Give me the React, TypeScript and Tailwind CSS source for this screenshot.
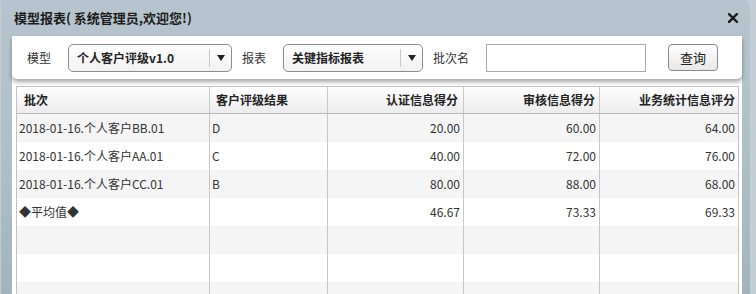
import React from 'react';

const rows = [
  { name: '2018-01-16.个人客户BB.01', grade: 'D', a: '20.00', b: '60.00', c: '64.00' },
  { name: '2018-01-16.个人客户AA.01', grade: 'C', a: '40.00', b: '72.00', c: '76.00' },
  { name: '2018-01-16.个人客户CC.01', grade: 'B', a: '80.00', b: '88.00', c: '68.00' },
  { name: '◆平均值◆', grade: '', a: '46.67', b: '73.33', c: '69.33' },
  { name: '', grade: '', a: '', b: '', c: '' },
  { name: '', grade: '', a: '', b: '', c: '' },
  { name: '', grade: '', a: '', b: '', c: '' },
];

function Select({ value, width }: { value: string; width: string }) {
  return (
    <div
      className={`${width} h-[28px] flex items-center rounded-[5px] border border-[#8d8d8d] bg-gradient-to-b from-white to-[#f1f1f1]`}
    >
      <span className="flex-1 pl-[8px] font-bold text-[12px] text-[#222]">{value}</span>
      <span className="w-px h-[18px] bg-[#c9c9c9]" />
      <span className="w-[21px] flex justify-center">
        <svg width="8" height="6" viewBox="0 0 8 6">
          <path d="M0 0 L8 0 L4 6 Z" fill="#222" />
        </svg>
      </span>
    </div>
  );
}

export default function App() {
  const cols = ['w-[193px]', 'w-[118px]', 'w-[136px]', 'w-[136px]', 'flex-1'];
  return (
    <div className="w-[756px] h-[294px] overflow-hidden bg-[#c4cfd5] font-['Noto_Sans_CJK_SC','Noto_Sans',sans-serif] text-[#333]">
      <div className="w-[750px] h-[294px] overflow-hidden rounded-tr-[6px] bg-gradient-to-b from-[#b6c5cd] via-[#afbfc8] to-[#a2b4be] border-l border-[#c3ced4] flex flex-col">
        <div className="h-[36px] shrink-0 flex items-center justify-between pl-[13px] pr-[12px]">
          <span className="font-bold text-[13px] text-[#1b1b1b]">模型报表( 系统管理员,欢迎您!)</span>
          <svg width="10" height="10" viewBox="0 0 10 10" className="mb-px">
            <path d="M1 1 L9 9 M9 1 L1 9" stroke="#1a1a1a" strokeWidth="2.4" strokeLinecap="square" />
          </svg>
        </div>
        <div className="ml-[11px] w-[730px] shrink-0 h-[300px] bg-white">
          <div className="h-[43px] flex items-center rounded-b-[5px] bg-white shadow-[0_3px_4px_rgba(0,0,0,0.35)] relative z-10 text-[12px]">
            <span className="ml-[15px] text-[#333]">模型</span>
            <div className="ml-[17px]">
              <Select value="个人客户评级v1.0" width="w-[164px]" />
            </div>
            <span className="ml-[10px] text-[#333]">报表</span>
            <div className="ml-[17px]">
              <Select value="关键指标报表" width="w-[140px]" />
            </div>
            <span className="ml-[10px] text-[#333]">批次名</span>
            <div className="ml-[17px] w-[160px] h-[28px] border border-[#a9a9a9] bg-white" />
            <div className="ml-[22px] w-[50px] h-[27px] rounded-[4px] border border-[#8a8a8a] bg-gradient-to-b from-white to-[#e8e8e8] flex items-center justify-center text-[13px] text-[#222]">
              查询
            </div>
          </div>
          <div className="mt-[7px] ml-[4px] w-[723px] border-l border-r border-t border-[#c2c2c2] text-[12px]">
            <div className="h-[27px] flex bg-gradient-to-b from-white to-[#ececec] border-b border-[#b9b9b9] font-bold text-[#222]">
              <div className={`${cols[0]} border-r border-[#c8c8c8] flex items-center pl-[7px]`}>批次</div>
              <div className={`${cols[1]} border-r border-[#c8c8c8] flex items-center pl-[6px]`}>客户评级结果</div>
              <div className={`${cols[2]} border-r border-[#c8c8c8] flex items-center justify-end pr-[5px]`}>认证信息得分</div>
              <div className={`${cols[3]} border-r border-[#c8c8c8] flex items-center justify-end pr-[4px]`}>审核信息得分</div>
              <div className={`${cols[4]} flex items-center justify-end pr-[3px]`}>业务统计信息评分</div>
            </div>
            {rows.map((r, i) => (
              <div key={i} className={`h-[28px] flex ${i % 2 === 0 ? 'bg-[#f5f5f5]' : 'bg-white'}`}>
                <div className={`${cols[0]} border-r border-[#c8c8c8] flex items-center pl-[2px] text-[#333]`}>{r.name}</div>
                <div className={`${cols[1]} border-r border-[#c8c8c8] flex items-center pl-[2px]`}>{r.grade}</div>
                <div className={`${cols[2]} border-r border-[#c8c8c8] flex items-center justify-end pr-[3px]`}>{r.a}</div>
                <div className={`${cols[3]} border-r border-[#c8c8c8] flex items-center justify-end pr-[3px]`}>{r.b}</div>
                <div className={`${cols[4]} flex items-center justify-end pr-[3px]`}>{r.c}</div>
              </div>
            ))}
          </div>
        </div>
      </div>
    </div>
  );
}
